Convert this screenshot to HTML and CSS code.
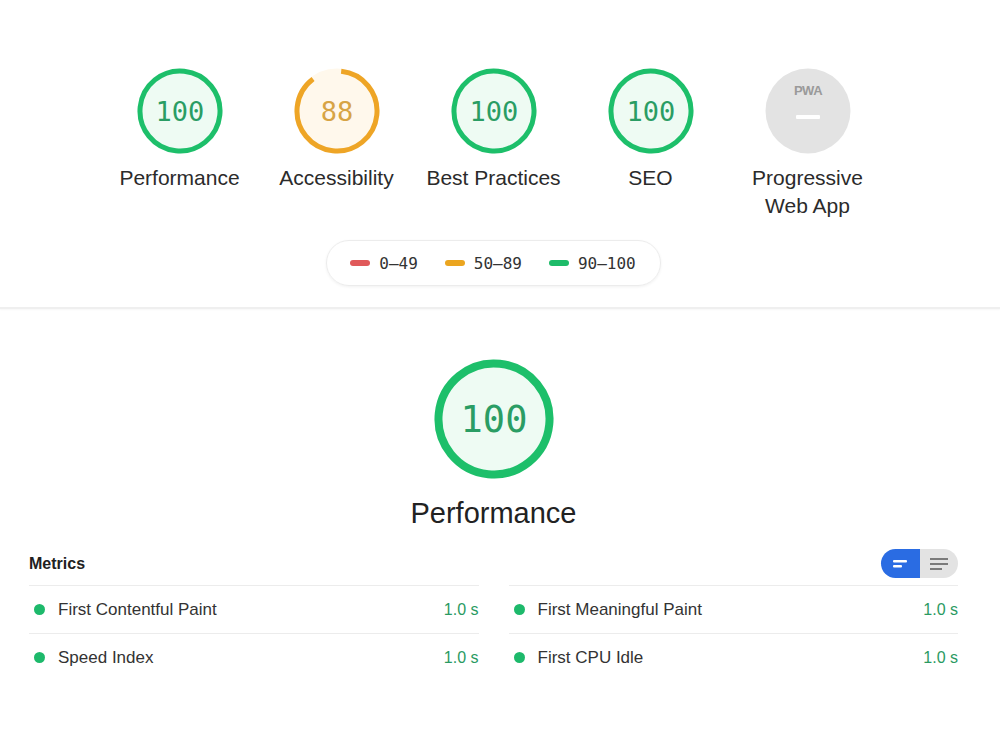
FILE: index.html
```html
<!DOCTYPE html>
<html lang="en">
<head>
  <meta charset="UTF-8">
  <title>Lighthouse Report</title>
  <link rel="stylesheet" href="styles.css">
</head>
<body>
  <div class="report">
    <!-- Category summary -->
    <div class="summary">
      <div class="gauges">
        <div class="gauge">
          <svg class="gauge-ring pass" viewBox="0 0 86 86" width="86" height="86">
            <circle class="gauge-base" cx="43" cy="43" r="40"/>
            <circle class="gauge-arc" cx="43" cy="43" r="40" stroke-dasharray="251.3 251.3"/>
            <text x="43" y="53" text-anchor="middle" class="gauge-num">100</text>
          </svg>
          <div class="gauge-label">Performance</div>
        </div>
        <div class="gauge">
          <svg class="gauge-ring average" viewBox="0 0 86 86" width="86" height="86">
            <circle class="gauge-base" cx="43" cy="43" r="40"/>
            <circle class="gauge-arc" cx="43" cy="43" r="40" stroke-dasharray="221.1 251.3"/>
            <text x="43" y="53" text-anchor="middle" class="gauge-num">88</text>
          </svg>
          <div class="gauge-label">Accessibility</div>
        </div>
        <div class="gauge">
          <svg class="gauge-ring pass" viewBox="0 0 86 86" width="86" height="86">
            <circle class="gauge-base" cx="43" cy="43" r="40"/>
            <circle class="gauge-arc" cx="43" cy="43" r="40" stroke-dasharray="251.3 251.3"/>
            <text x="43" y="53" text-anchor="middle" class="gauge-num">100</text>
          </svg>
          <div class="gauge-label">Best Practices</div>
        </div>
        <div class="gauge">
          <svg class="gauge-ring pass" viewBox="0 0 86 86" width="86" height="86">
            <circle class="gauge-base" cx="43" cy="43" r="40"/>
            <circle class="gauge-arc" cx="43" cy="43" r="40" stroke-dasharray="251.3 251.3"/>
            <text x="43" y="53" text-anchor="middle" class="gauge-num">100</text>
          </svg>
          <div class="gauge-label">SEO</div>
        </div>
        <div class="gauge">
          <svg class="gauge-ring pwa" viewBox="0 0 86 86" width="86" height="86">
            <circle cx="43" cy="43" r="42.5" fill="#e3e3e3"/>
            <text x="43" y="27" text-anchor="middle" class="pwa-text">PWA</text>
            <rect x="31" y="47" width="24" height="4" rx="1" fill="#fff"/>
          </svg>
          <div class="gauge-label">Progressive<br>Web App</div>
        </div>
      </div>

      <div class="legend">
        <span class="legend-item"><i class="dash fail"></i>0–49</span>
        <span class="legend-item"><i class="dash average"></i>50–89</span>
        <span class="legend-item"><i class="dash pass"></i>90–100</span>
      </div>
    </div>
  </div>

  <div class="divider"></div>

  <div class="report">
    <!-- Performance category -->
    <div class="category">
      <svg class="big-gauge" viewBox="0 0 120 120" width="120" height="120">
        <circle class="gauge-base" cx="60" cy="60" r="55.5"/>
        <circle class="gauge-arc" cx="60" cy="60" r="55.5"/>
        <text x="60" y="73" text-anchor="middle" class="big-num">100</text>
      </svg>
      <div class="category-title">Performance</div>
    </div>

    <div class="metrics-header">
      <h3>Metrics</h3>
      <div class="toggle">
        <span class="toggle-btn on">
          <svg width="16" height="10" viewBox="0 0 16 10"><rect x="0" y="1" width="14" height="2.4" rx="1" fill="#fff"/><rect x="0" y="6" width="9" height="2.4" rx="1" fill="#fff"/></svg>
        </span>
        <span class="toggle-btn off">
          <svg width="18" height="14" viewBox="0 0 18 14"><rect x="0" y="1" width="18" height="2" fill="#7a7a7a"/><rect x="0" y="6" width="18" height="2" fill="#7a7a7a"/><rect x="0" y="11" width="12" height="2" fill="#7a7a7a"/></svg>
        </span>
      </div>
    </div>

    <div class="metrics">
      <div class="metric"><i class="dot"></i><span class="metric-name">First Contentful Paint</span><span class="metric-value">1.0 s</span></div>
      <div class="metric"><i class="dot"></i><span class="metric-name">First Meaningful Paint</span><span class="metric-value">1.0 s</span></div>
      <div class="metric"><i class="dot"></i><span class="metric-name">Speed Index</span><span class="metric-value">1.0 s</span></div>
      <div class="metric"><i class="dot"></i><span class="metric-name">First CPU Idle</span><span class="metric-value">1.0 s</span></div>
    </div>
  </div>
</body>
</html>
```

FILE: styles.css
```css
body {
  margin: 0;
  background: #fff;
  font-family: 'Liberation Sans', Arial, sans-serif;
  color: #212121;
}

.report {
  padding: 0 42px 0 29px;
}

.summary {
  padding-top: 68px;
  display: flex;
  flex-direction: column;
  align-items: center;
}

.gauges {
  display: flex;
}
.gauge {
  width: 157px;
  display: flex;
  flex-direction: column;
  align-items: center;
}
.gauge-ring {
  display: block;
}
.gauge-label {
  margin-top: 10px;
  font-size: 21px;
  line-height: 28px;
  text-align: center;
  color: #2b2b2b;
}

.gauge-base {
  stroke-width: 5;
}
.gauge-arc {
  fill: none;
  stroke-width: 5;
  transform: rotate(-84deg);
  transform-origin: center;
}
.pass .gauge-base { fill: #eefbf3; stroke: #eefbf3; }
.pass .gauge-arc { stroke: #1dbf6a; }
.pass .gauge-num { fill: #2a9d64; }
.average .gauge-base { fill: #fff8ec; stroke: #fff8ec; }
.average .gauge-arc { stroke: #eea526; }
.average .gauge-num { fill: #d7a445; }

.gauge-num {
  font-family: 'DejaVu Sans Mono', monospace;
  font-size: 27px;
}
.pwa-text {
  font-family: 'Liberation Sans', Arial, sans-serif;
  font-weight: bold;
  font-size: 13px;
  fill: #9a9a9a;
  letter-spacing: -0.5px;
}

.legend {
  margin-top: 20px;
  height: 44px;
  padding: 0 24px 0 23px;
  display: flex;
  align-items: center;
  gap: 27px;
  border: 1px solid #ececec;
  border-radius: 23px;
  box-shadow: 0 1px 3px rgba(0, 0, 0, 0.06);
  font-family: 'DejaVu Sans Mono', monospace;
  font-size: 16px;
  color: #333;
}
.legend-item {
  display: flex;
  align-items: center;
}
.dash {
  width: 20px;
  height: 6px;
  border-radius: 3px;
  margin-right: 9px;
}
.dash.fail { background: #e0595a; }
.dash.average { background: #eba51f; }
.dash.pass { background: #1dbb69; }

.divider {
  margin-top: 21px;
  height: 2px;
  background: #efefef;
  box-shadow: 0 1px 2px rgba(0, 0, 0, 0.04);
}

.category {
  padding-top: 50px;
  display: flex;
  flex-direction: column;
  align-items: center;
}
.big-gauge {
  display: block;
}
.big-gauge .gauge-base {
  fill: #eefbf3;
  stroke: #eefbf3;
  stroke-width: 8;
}
.big-gauge .gauge-arc {
  stroke: #1dbf6a;
  stroke-width: 8;
}
.big-num {
  font-family: 'DejaVu Sans Mono', monospace;
  font-size: 37px;
  fill: #2a9d64;
}
.category-title {
  margin-top: 16px;
  font-size: 29px;
  line-height: 36px;
  color: #222;
}

.metrics-header {
  margin-top: 18px;
  display: flex;
  justify-content: space-between;
  align-items: center;
}
.metrics-header h3 {
  margin: 0;
  font-size: 16px;
  font-weight: bold;
  color: #212121;
}
.toggle {
  display: flex;
  height: 29px;
}
.toggle-btn {
  width: 39px;
  display: flex;
  align-items: center;
  justify-content: center;
}
.toggle-btn.on {
  background: #2a6ce3;
  border-radius: 15px 0 0 15px;
}
.toggle-btn.off {
  width: 38px;
  background: #e3e3e3;
  border-radius: 0 15px 15px 0;
}

.metrics {
  margin-top: 7px;
  display: grid;
  grid-template-columns: 1fr 1fr;
  column-gap: 30px;
}
.metric {
  height: 47px;
  display: flex;
  align-items: center;
  border-top: 1px solid #ececec;
  font-size: 17px;
}
.dot {
  width: 11px;
  height: 11px;
  border-radius: 50%;
  background: #1db96b;
  margin: 0 13px 0 5px;
}
.metric-name {
  flex: 1;
  color: #333;
}
.metric-value {
  color: #2a9a62;
  font-size: 16px;
}
```
